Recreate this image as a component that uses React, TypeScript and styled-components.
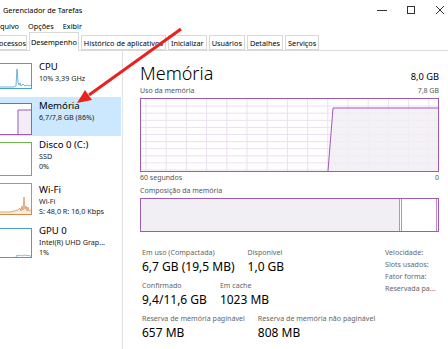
import React from "react";
import styled, { createGlobalStyle } from "styled-components";

const GlobalStyle = createGlobalStyle`
  html, body { margin: 0; padding: 0; background: #ffffff; }
  body { font-family: "Noto Sans", "Open Sans", sans-serif; color: #000; }
  * { box-sizing: border-box; }
`;

const Window = styled.div`
  position: relative;
  width: 448px;
  height: 349px;
  overflow: hidden;
  background: #ffffff;
  display: flex;
  flex-direction: column;
`;

const TitleBar = styled.div`
  height: 20px;
  display: flex;
  align-items: center;
  padding-left: 3px;
  font-size: 7.3px;
`;

const TitleText = styled.div`
  flex: 1;
`;

const Controls = styled.div`
  display: flex;
  height: 20px;
  margin-right: -6px;
`;

const ControlBtn = styled.div`
  width: 29px;
  height: 20px;
  display: flex;
  align-items: center;
  justify-content: center;
`;

const MenuBar = styled.div`
  height: 12px;
  display: flex;
  align-items: center;
  gap: 9px;
  font-size: 7.3px;
`;

const TabStrip = styled.div`
  height: 19px;
  display: flex;
  align-items: flex-end;
  gap: 2px;
  border-bottom: 1px solid #d9d9d9;
  background: #ffffff;
`;

const Tab = styled.div<{ $active?: boolean; $pad?: number; $shift?: number }>`
  height: ${(p) => (p.$active ? "19px" : "15px")};
  margin-bottom: ${(p) => (p.$active ? "-1px" : "0")};
  margin-left: ${(p) => p.$shift ?? 0}px;
  padding: 0 ${(p) => (p.$pad ?? 2)}px;
  display: flex;
  align-items: center;
  font-size: 7.3px;
  white-space: nowrap;
  background: #ffffff;
  border: 1px solid #d9d9d9;
  border-bottom: ${(p) => (p.$active ? "none" : "1px solid #d9d9d9")};
`;

const Body = styled.div`
  flex: 1;
  display: flex;
`;

const Sidebar = styled.div`
  width: 123px;
  border-right: 1px solid #e3e3e3;
  padding-top: 7px;
  display: flex;
  flex-direction: column;
`;

const Item = styled.div<{ $h: number; $selected?: boolean }>`
  height: ${(p) => p.$h}px;
  display: flex;
  align-items: flex-start;
  background: ${(p) => (p.$selected ? "#cce8ff" : "transparent")};
  width: 121px;
`;

const Thumb = styled.div<{ $color: string; $h: number; $top: number }>`
  width: 33px;
  height: ${(p) => p.$h}px;
  margin-top: ${(p) => p.$top}px;
  margin-left: -1px;
  border: 1px solid ${(p) => p.$color};
  background: #ffffff;
  flex-shrink: 0;
  svg { display: block; }
`;

const ItemText = styled.div<{ $top: number }>`
  margin-left: 7px;
  margin-top: ${(p) => p.$top}px;
  display: flex;
  flex-direction: column;
  white-space: nowrap;
`;

const ItemTitle = styled.div`
  font-size: 9.6px;
  line-height: 12px;
`;

const ItemSub = styled.div`
  font-size: 7.2px;
  line-height: 10px;
  color: #222;
`;

const Content = styled.div`
  flex: 1;
  padding: 10px 9px 0 17px;
  display: flex;
  flex-direction: column;
`;

const HeaderRow = styled.div`
  display: flex;
  align-items: baseline;
  justify-content: space-between;
  height: 25px;
`;

const Heading = styled.div`
  font-size: 18px;
  font-weight: 300;
  line-height: 24px;
`;

const HeadingRight = styled.div`
  font-size: 9.3px;
`;

const AxisRow = styled.div<{ $top?: number }>`
  display: flex;
  justify-content: space-between;
  font-size: 7px;
  line-height: 10px;
  color: #555;
  margin-top: ${(p) => p.$top ?? 0}px;
`;

const Chart = styled.div<{ $h: number }>`
  height: ${(p) => p.$h}px;
  border: 1px solid #9d5bb3;
  margin: 2px 0 1px;
  svg { display: block; }
`;

const CompBar = styled.div`
  height: 34px;
  border: 1px solid #9d5bb3;
  margin-top: 2px;
  display: flex;
`;

const CompSeg = styled.div<{ $w?: number; $bg: string; $border?: boolean }>`
  ${(p) => (p.$w !== undefined ? `width: ${p.$w}px;` : "flex: 1;")}
  background: ${(p) => p.$bg};
  border-right: ${(p) => (p.$border ? "1px solid #b98bc8" : "none")};
`;

const Stats = styled.div`
  display: flex;
  margin-top: 15px;
  padding-left: 2px;
`;

const StatsLeft = styled.div`
  flex: 1;
  display: flex;
  flex-direction: column;
`;

const StatRow = styled.div`
  display: flex;
  gap: 13px;
  margin-bottom: 3px;
`;

const Stat = styled.div`
  display: flex;
  flex-direction: column;
  white-space: nowrap;
`;

const StatLabel = styled.div`
  font-size: 7.1px;
  line-height: 10px;
  color: #666;
`;

const StatValue = styled.div`
  font-size: 12px;
  line-height: 20px;
`;

const StatsRight = styled.div`
  width: 54px;
  display: flex;
  flex-direction: column;
  font-size: 7.1px;
  line-height: 12px;
  color: #666;
  margin-top: -1px;
  white-space: nowrap;
`;

const ArrowLayer = styled.svg`
  position: absolute;
  left: 0;
  top: 0;
  pointer-events: none;
`;

function Grid({ w, h }: { w: number; h: number }) {
  const lines: React.ReactNode[] = [];
  for (let x = 5; x < w; x += 20.2) {
    lines.push(<line key={"v" + x} x1={x} y1={0} x2={x} y2={h} stroke="#ecdff0" strokeWidth={1} />);
  }
  for (let y = 7.1; y < h; y += 7.1) {
    lines.push(<line key={"h" + y} x1={0} y1={y} x2={w} y2={y} stroke="#ecdff0" strokeWidth={1} />);
  }
  return <>{lines}</>;
}

export default function App() {
  return (
    <>
      <GlobalStyle />
      <Window>
        <TitleBar>
          <TitleText>Gerenciador de Tarefas</TitleText>
          <Controls>
            <ControlBtn>
              <svg width="10" height="10" viewBox="0 0 10 10">
                <line x1="0" y1="5.5" x2="10" y2="5.5" stroke="#333" strokeWidth="1" />
              </svg>
            </ControlBtn>
            <ControlBtn>
              <svg width="10" height="10" viewBox="0 0 10 10">
                <rect x="1.5" y="1.5" width="7" height="7" fill="none" stroke="#333" strokeWidth="1" />
              </svg>
            </ControlBtn>
            <ControlBtn>
              <svg width="10" height="10" viewBox="0 0 10 10">
                <path d="M1 1L9 9M9 1L1 9" stroke="#333" strokeWidth="1" />
              </svg>
            </ControlBtn>
          </Controls>
        </TitleBar>
        <MenuBar>
          <span>quivo</span>
          <span>Opções</span>
          <span>Exibir</span>
        </MenuBar>
        <TabStrip>
          <Tab $pad={0} $shift={-2}>ocessos</Tab>
          <Tab $active $pad={1}>Desempenho</Tab>
          <Tab>Histórico de aplicativos</Tab>
          <Tab>Inicializar</Tab>
          <Tab>Usuários</Tab>
          <Tab>Detalhes</Tab>
          <Tab>Serviços</Tab>
        </TabStrip>
        <Body>
          <Sidebar>
            <Item $h={39}>
              <Thumb $color="#4a9fcf" $h={26} $top={5}>
                <svg width="31" height="24" viewBox="0 0 31 24">
                  <polyline
                    points="0,23 14,23 16,22 17,5 18,18 19,21 20,19 21,22 23,20 25,22 27,21 29,22 31,21"
                    fill="none"
                    stroke="#4a9fcf"
                    strokeWidth="0.8"
                  />
                </svg>
              </Thumb>
              <ItemText $top={3}>
                <ItemTitle>CPU</ItemTitle>
                <ItemSub>10% 3,39 GHz</ItemSub>
              </ItemText>
            </Item>
            <Item $h={39} $selected>
              <Thumb $color="#9d5bb3" $h={32} $top={6}>
                <svg width="31" height="30" viewBox="0 0 31 30">
                  <polygon points="18,30 18,6 31,6 31,30" fill="#f3eef5" />
                  <polyline points="18,30 18,6 31,6" fill="none" stroke="#9d5bb3" strokeWidth="1" />
                </svg>
              </Thumb>
              <ItemText $top={3}>
                <ItemTitle>Memória</ItemTitle>
                <ItemSub>6,7/7,8 GB (86%)</ItemSub>
              </ItemText>
            </Item>
            <Item $h={43}>
              <Thumb $color="#6db64a" $h={34} $top={6}>
                <svg width="31" height="32" viewBox="0 0 31 32" />
              </Thumb>
              <ItemText $top={3}>
                <ItemTitle>Disco 0 (C:)</ItemTitle>
                <ItemSub>SSD</ItemSub>
                <ItemSub>0%</ItemSub>
              </ItemText>
            </Item>
            <Item $h={43}>
              <Thumb $color="#cf8a52" $h={32} $top={4}>
                <svg width="31" height="30" viewBox="0 0 31 30">
                  <polygon
                    points="0,30 0,28 10,28 14,27 18,26 20,24 21,27 22,22 23,26 24,13 25,25 26,22 27,27 28,23 29,27 31,26 31,30"
                    fill="#fbe9da"
                  />
                  <polyline
                    points="0,28 10,28 14,27 18,26 20,24 21,27 22,22 23,26 24,13 25,25 26,22 27,27 28,23 29,27 31,26"
                    fill="none"
                    stroke="#cf8a52"
                    strokeWidth="0.7"
                  />
                </svg>
              </Thumb>
              <ItemText $top={5}>
                <ItemTitle>Wi-Fi</ItemTitle>
                <ItemSub>Wi-Fi</ItemSub>
                <ItemSub>S: 48,0 R: 16,0 Kbps</ItemSub>
              </ItemText>
            </Item>
            <Item $h={40}>
              <Thumb $color="#4a9fcf" $h={30} $top={6}>
                <svg width="31" height="28" viewBox="0 0 31 28">
                  <polyline
                    points="16,28 17,26 18,27 20,26 22,27 24,26 31,27"
                    fill="none"
                    stroke="#4a9fcf"
                    strokeWidth="0.7"
                  />
                </svg>
              </Thumb>
              <ItemText $top={3}>
                <ItemTitle>GPU 0</ItemTitle>
                <ItemSub>Intel(R) UHD Grap...</ItemSub>
                <ItemSub>1%</ItemSub>
              </ItemText>
            </Item>
          </Sidebar>
          <Content>
            <HeaderRow>
              <Heading>Memória</Heading>
              <HeadingRight>8,0 GB</HeadingRight>
            </HeaderRow>
            <AxisRow>
              <span>Uso da memória</span>
              <span>7,8 GB</span>
            </AxisRow>
            <Chart $h={74}>
              <svg width="297" height="72" viewBox="0 0 297 72">
                <Grid w={297} h={72} />
                <polygon points="187,72 192,9 297,9 297,72" fill="#f1edf4" opacity="0.85" />
                <polyline points="187,72 192,9 297,9" fill="none" stroke="#9d5bb3" strokeWidth="1" />
              </svg>
            </Chart>
            <AxisRow>
              <span>60 segundos</span>
              <span>0</span>
            </AxisRow>
            <AxisRow $top={3}>
              <span>Composição da memória</span>
            </AxisRow>
            <CompBar>
              <CompSeg $w={259} $bg="#f1eff3" $border />
              <CompSeg $w={2} $bg="#ffffff" $border />
              <CompSeg $bg="#ffffff" $border />
              <CompSeg $w={1} $bg="#ffffff" />
            </CompBar>
            <Stats>
              <StatsLeft>
                <StatRow>
                  <Stat>
                    <StatLabel>Em uso (Compactada)</StatLabel>
                    <StatValue>6,7 GB (19,5 MB)</StatValue>
                  </Stat>
                  <Stat>
                    <StatLabel>Disponível</StatLabel>
                    <StatValue>1,0 GB</StatValue>
                  </Stat>
                </StatRow>
                <StatRow>
                  <Stat>
                    <StatLabel>Confirmado</StatLabel>
                    <StatValue>9,4/11,6 GB</StatValue>
                  </Stat>
                  <Stat>
                    <StatLabel>Em cache</StatLabel>
                    <StatValue>1023 MB</StatValue>
                  </Stat>
                </StatRow>
                <StatRow>
                  <Stat>
                    <StatLabel>Reserva de memória paginável</StatLabel>
                    <StatValue>657 MB</StatValue>
                  </Stat>
                  <Stat>
                    <StatLabel>Reserva de memória não paginável</StatLabel>
                    <StatValue>808 MB</StatValue>
                  </Stat>
                </StatRow>
              </StatsLeft>
              <StatsRight>
                <span>Velocidade:</span>
                <span>Slots usados:</span>
                <span>Fator forma:</span>
                <span>Reservada pa...</span>
              </StatsRight>
            </Stats>
          </Content>
        </Body>
        <ArrowLayer width="448" height="349" viewBox="0 0 448 349">
          <line x1="181" y1="29" x2="89" y2="95" stroke="#e8231f" strokeWidth="3" />
          <polygon points="77,103 92,100 85,90" fill="#e8231f" />
        </ArrowLayer>
      </Window>
    </>
  );
}
